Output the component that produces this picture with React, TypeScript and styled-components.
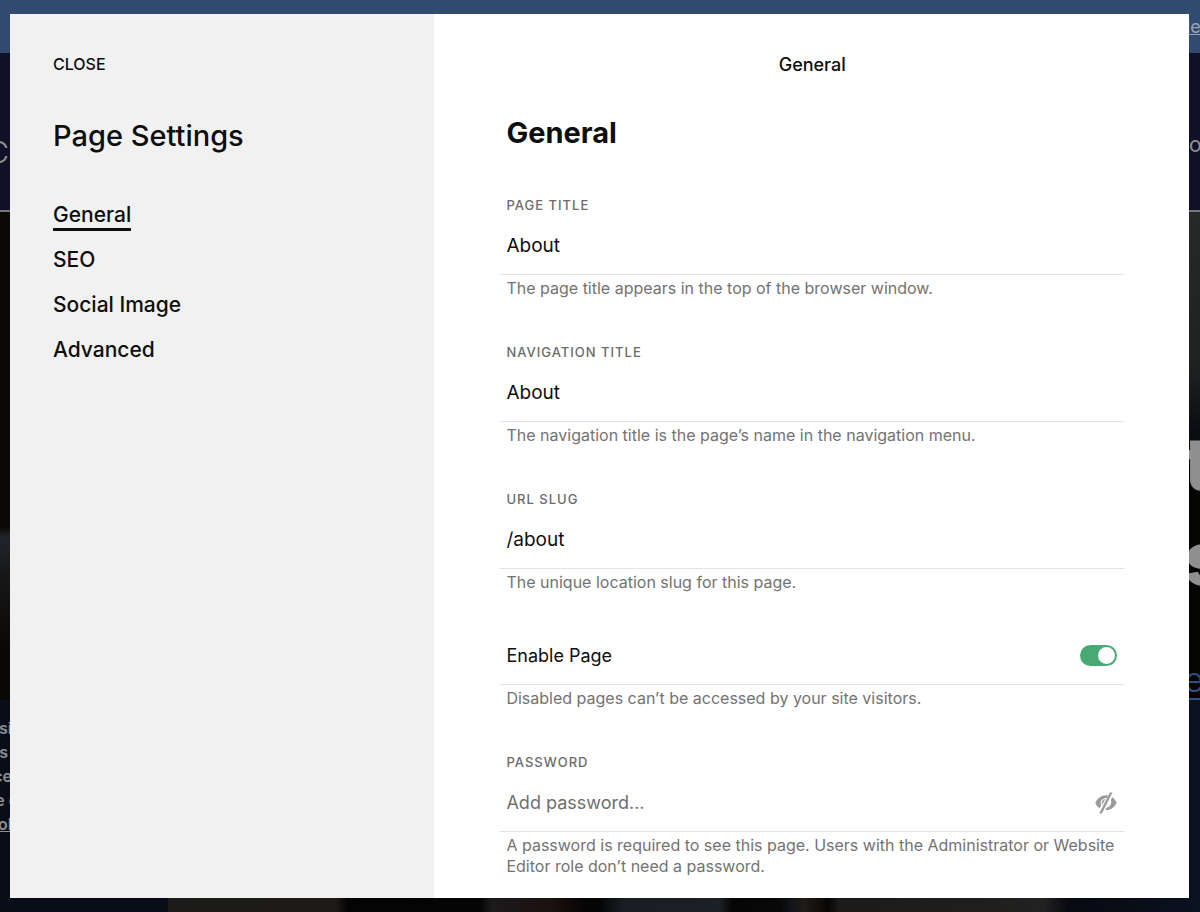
import React from "react";
import styled, { createGlobalStyle } from "styled-components";

const GlobalStyle = createGlobalStyle`
  * { box-sizing: border-box; }
  html, body { margin: 0; height: 100%; }
  body {
    font-family: Inter, "Liberation Sans", sans-serif;
    color: #0e0e0e;
    background: #080d17;
    overflow: hidden;
  }
  #root { height: 100%; }
  button, input { font: inherit; color: inherit; }
`;

const Site = styled.div`
  display: flex;
  flex-direction: column;
  height: 100vh;
  overflow: hidden;
  color: #8f8f8f;
`;

const Banner = styled.div`
  flex: 0 0 53px;
  padding: 16px 0 0 calc(100% - 14px);
  background: #304a70;
  font-size: 18px;
  line-height: 22px;
  a { color: #9aa3b3; }
`;

const SiteHeader = styled.div`
  display: flex;
  justify-content: space-between;
  align-items: center;
  flex: 0 0 159px;
  padding-top: 26px;
  border-bottom: 2px solid #77777b;
  background: #101027;
`;

const Logo = styled.span`
  width: 9px;
  display: flex;
  justify-content: flex-end;
  padding-top: 14px;
  font-size: 30px;
  font-weight: 300;
`;

const NavItem = styled.span`
  width: 11px;
  font-size: 21px;
`;

const Hero = styled.div`
  display: flex;
  flex-direction: column;
  flex: 0 0 485px;
  padding-left: calc(100% - 16px);
  background:
    linear-gradient(180deg, transparent 315px, #20252b 325px, #171717 365px, #0a0806 440px) left / 20px 100% no-repeat,
    linear-gradient(180deg, #272929 0, #202222 150px, #0b0d12 220px, #050504 260px) right / 20px 100% no-repeat,
    #0c0805;
`;

const HeroTitle = styled.div`
  padding-top: 204px;
  font-size: 74px;
  font-weight: 800;
  line-height: 95px;
`;

const HeroLink = styled.a`
  margin-top: 54px;
  font-size: 34px;
  font-weight: 300;
  line-height: 40px;
  color: #314f82;
  text-underline-offset: 6px;
`;

const About = styled.div`
  display: flex;
  flex-direction: column;
  flex: 1 0 auto;
  padding-top: 16px;
  background: linear-gradient(90deg, #080d17 50%, #0a1222);
`;

const AboutLine = styled.span<{ $long?: boolean }>`
  display: flex;
  justify-content: flex-end;
  width: ${(p) => (p.$long ? 18 : 12)}px;
  font-size: 16px;
  font-weight: 600;
  line-height: 24px;
  white-space: pre;
  a { color: inherit; }
`;

const Photo = styled.div`
  flex: 0 0 18px;
  background: linear-gradient(
    90deg,
    #080d17 14%, #1d1c1a 14%, #1e1b18 28%, #040404 29%, #060505 40%,
    #1b1a1c 41%, #1c1010 46%, #040404 49%, #050607 50%, #1a1e23 52%,
    #1b2024 60%, #060606 61%, #080808 65%, #12151a 66%, #201b17 67%,
    #080605 69%, #1c1b1a 70%, #201f1e 84%, #222222 87%, #080a10 89%, #0a1120 100%
  );
`;

const Dialog = styled.section`
  position: fixed;
  inset: 14px 11px 14px 10px;
  display: flex;
  background: #fff;
  overflow: hidden;
`;

const Sidebar = styled.aside`
  flex: 0 0 36%;
  padding: 38px 43px;
  background: #f1f1f1;
`;

const CloseButton = styled.button`
  display: block;
  padding: 0;
  border: 0;
  background: none;
  font-size: 16px;
  font-weight: 500;
  line-height: 24px;
  cursor: pointer;
`;

const SidebarTitle = styled.h1`
  margin: 40px 0 45px;
  font-size: 29px;
  font-weight: 500;
  line-height: 40px;
`;

const Tabs = styled.nav`
  display: flex;
  flex-direction: column;
  align-items: flex-start;
  gap: 15px;
`;

const Tab = styled.a<{ $active?: boolean }>`
  border-bottom: 3px solid ${(p) => (p.$active ? "#0e0e0e" : "transparent")};
  color: inherit;
  font-size: 21px;
  font-weight: 500;
  line-height: 27px;
  text-decoration: none;
`;

const Main = styled.main`
  flex: 1;
  min-width: 0;
  padding: 38px 65px 0 66px;
  overflow: hidden;
`;

const MainHeader = styled.header`
  font-size: 18px;
  font-weight: 500;
  line-height: 26px;
  text-align: center;
`;

const Heading = styled.h2`
  margin: 35px 0 46px;
  padding: 0 6px;
  font-size: 29px;
  font-weight: 700;
  line-height: 39px;
`;

const Form = styled.form`
  display: flex;
  flex-direction: column;
  gap: 46px;
`;

const FieldBox = styled.div`
  display: flex;
  flex-direction: column;
`;

const Label = styled.label`
  padding: 0 6px 2px;
  color: #6b6b6b;
  font-size: 13px;
  font-weight: 500;
  line-height: 14px;
  letter-spacing: 1px;
  text-transform: uppercase;
`;

const Control = styled.div`
  display: flex;
  align-items: center;
  height: 61px;
  padding: 3px 7px 0 6px;
  border-bottom: 1px solid #e3e3e3;
`;

const TextInput = styled.input`
  flex: 1;
  min-width: 0;
  padding: 0;
  border: 0;
  outline: 0;
  background: none;
  font-size: 19px;
  line-height: 26px;
  &::placeholder { color: #6f6f6f; font-size: 18px; opacity: 1; }
`;

const Help = styled.p`
  margin: 0;
  padding: 3px 6px 0;
  color: #737373;
  font-size: 16px;
  line-height: 21px;
`;

const ToggleRow = styled.label`
  display: flex;
  align-items: center;
  justify-content: space-between;
  height: 46px;
  padding: 0 7px 12px 6px;
  border-bottom: 1px solid #e3e3e3;
  font-size: 18px;
`;

const Toggle = styled.input`
  appearance: none;
  display: flex;
  align-items: center;
  justify-content: flex-start;
  width: 37px;
  height: 21px;
  margin: 0;
  padding: 0 2px;
  border-radius: 11px;
  background: #b5b5b5;
  cursor: pointer;
  &::before {
    content: "";
    width: 17px;
    height: 17px;
    border-radius: 50%;
    background: #fff;
  }
  &:checked { justify-content: flex-end; background: #49a974; }
`;

const IconButton = styled.button`
  display: flex;
  padding: 0;
  border: 0;
  background: none;
  color: #9b9b9b;
  cursor: pointer;
`;

function HiddenEyeIcon() {
  return (
    <svg width="22" height="22" viewBox="0 0 22 22" fill="currentColor" aria-hidden="true">
      <path d="M13 3.400C6.800 2.600 2.600 6 .3 10.800c1 2.300 2.400 4.200 4.300 5.500l1.500-2.700c-1.300-3.600.5-7 4.700-7.500l1.200-.1Z" />
      <path d="M10.400 6.800c-3.200.8-4.300 3.800-3.300 6.300Z" />
      <path d="M14.800.5h2.700L6.900 21.400H4.200Z" />
      <path d="M17.300 5.200c2 1.300 3.400 3.300 4.400 5.600-2.300 4.800-6.300 7.800-11.300 7.300l1.300-2.500c3.600-.7 5.300-3.900 4.200-7.600Z" />
    </svg>
  );
}

type FieldProps = {
  id: string;
  label: string;
  value?: string;
  placeholder?: string;
  type?: string;
  help: string;
  children?: React.ReactNode;
};

function Field({ id, label, value, placeholder, type = "text", help, children }: FieldProps) {
  return (
    <FieldBox>
      <Label htmlFor={id}>{label}</Label>
      <Control>
        <TextInput id={id} type={type} defaultValue={value} placeholder={placeholder} />
        {children}
      </Control>
      <Help>{help}</Help>
    </FieldBox>
  );
}

export default function App() {
  return (
    <>
      <GlobalStyle />
      <Site aria-hidden="true">
        <Banner><a href="#learn">le</a></Banner>
        <SiteHeader>
          <Logo>C</Logo>
          <NavItem>o</NavItem>
        </SiteHeader>
        <Hero>
          <HeroTitle>t<br />s</HeroTitle>
          <HeroLink href="#more">e</HeroLink>
        </Hero>
        <About>
          <AboutLine>si</AboutLine>
          <AboutLine>{"s "}</AboutLine>
          <AboutLine>ce</AboutLine>
          <AboutLine $long>e c</AboutLine>
          <AboutLine><a href="#policy">ol</a></AboutLine>
        </About>
        <Photo />
      </Site>
      <Dialog role="dialog" aria-label="Page Settings">
        <Sidebar>
          <CloseButton type="button">CLOSE</CloseButton>
          <SidebarTitle>Page Settings</SidebarTitle>
          <Tabs>
            <Tab href="#general" $active>General</Tab>
            <Tab href="#seo">SEO</Tab>
            <Tab href="#social-image">Social Image</Tab>
            <Tab href="#advanced">Advanced</Tab>
          </Tabs>
        </Sidebar>
        <Main>
          <MainHeader>General</MainHeader>
          <Heading>General</Heading>
          <Form>
            <Field id="page-title" label="Page Title" value="About" help="The page title appears in the top of the browser window." />
            <Field id="navigation-title" label="Navigation Title" value="About" help="The navigation title is the page’s name in the navigation menu." />
            <Field id="url-slug" label="URL Slug" value="/about" help="The unique location slug for this page." />
            <FieldBox>
              <ToggleRow>
                Enable Page
                <Toggle type="checkbox" role="switch" defaultChecked />
              </ToggleRow>
              <Help>Disabled pages can’t be accessed by your site visitors.</Help>
            </FieldBox>
            <Field
              id="password"
              label="Password"
              type="password"
              placeholder="Add password..."
              help="A password is required to see this page. Users with the Administrator or Website Editor role don’t need a password."
            >
              <IconButton type="button" aria-label="Show password"><HiddenEyeIcon /></IconButton>
            </Field>
          </Form>
        </Main>
      </Dialog>
    </>
  );
}
